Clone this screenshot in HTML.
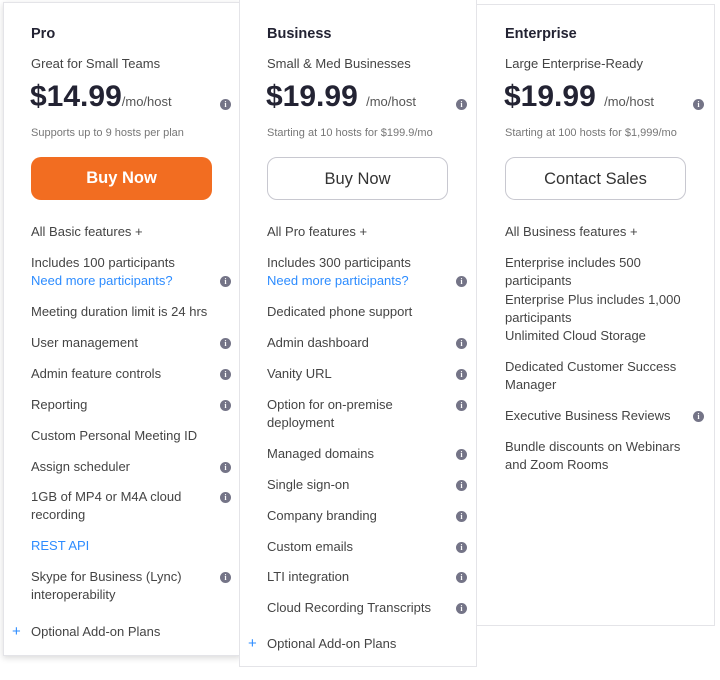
<!DOCTYPE html>
<html><head><meta charset="utf-8"><style>
body{margin:0;width:720px;height:680px;background:#fff;position:relative;overflow:hidden;font-family:"Liberation Sans",sans-serif;color:#3a3a40}
.card{position:absolute;background:#fff;border:1px solid #e4e4e8}
.t{position:absolute;font-size:13px;line-height:18px;white-space:nowrap;color:#444}
.h{font-size:14.5px;font-weight:bold;color:#232333}
.s{font-size:11px;color:#777}
.l{color:#2d8cff}
.p{position:absolute;font-size:30px;font-weight:bold;color:#232333;line-height:36px;white-space:nowrap}
.p span{font-size:13px;font-weight:normal;color:#555}
.i{position:absolute;width:11px;height:11px;border-radius:50%;background:#747487;color:#fff;font:bold 8px/11px "Liberation Serif",serif;text-align:center}
.b{position:absolute;width:181px;height:43px;border-radius:10px;font-size:16.5px;line-height:43px;text-align:center;box-sizing:border-box}
.plus{position:absolute;color:#2d8cff;font-size:15px;line-height:18px}
</style></head><body>
<div class="card" style="left:476px;top:4px;width:237px;height:620px"></div>
<div class="card" style="left:3px;top:2px;width:236px;height:652px;box-shadow:0 2px 6px rgba(0,0,0,.15)"></div>
<div class="card" style="left:239px;top:-1px;width:236px;height:666px"></div>

<!-- Pro -->
<div class="t h" style="left:31px;top:25px">Pro</div>
<div class="t" style="left:31px;top:55px">Great for Small Teams</div>
<div class="p" style="left:30px;top:79px">$14.99<span>/mo/host</span></div>
<div class="i" style="left:220px;top:99px">i</div>
<div class="t s" style="left:31px;top:124px">Supports up to 9 hosts per plan</div>
<div class="b" style="left:31px;top:157px;background:#f26d21;color:#fff;font-weight:bold">Buy Now</div>
<div class="t" style="left:31px;top:223px">All Basic features +</div>
<div class="t" style="left:31px;top:254px">Includes 100 participants</div>
<div class="t l" style="left:31px;top:272px">Need more participants?</div>
<div class="t" style="left:31px;top:303px">Meeting duration limit is 24 hrs</div>
<div class="t" style="left:31px;top:334px">User management</div>
<div class="t" style="left:31px;top:365px">Admin feature controls</div>
<div class="t" style="left:31px;top:396px">Reporting</div>
<div class="t" style="left:31px;top:427px">Custom Personal Meeting ID</div>
<div class="t" style="left:31px;top:458px">Assign scheduler</div>
<div class="t" style="left:31px;top:488px">1GB of MP4 or M4A cloud</div>
<div class="t" style="left:31px;top:506px">recording</div>
<div class="t l" style="left:31px;top:537px">REST API</div>
<div class="t" style="left:31px;top:568px">Skype for Business (Lync)</div>
<div class="t" style="left:31px;top:586px">interoperability</div>
<div class="plus" style="left:12px;top:623px">+</div>
<div class="t" style="left:31px;top:623px">Optional Add-on Plans</div>
<div class="i" style="left:220px;top:276px">i</div>
<div class="i" style="left:220px;top:338px">i</div>
<div class="i" style="left:220px;top:369px">i</div>
<div class="i" style="left:220px;top:400px">i</div>
<div class="i" style="left:220px;top:462px">i</div>
<div class="i" style="left:220px;top:492px">i</div>
<div class="i" style="left:220px;top:572px">i</div>

<!-- Business -->
<div class="t h" style="left:267px;top:25px">Business</div>
<div class="t" style="left:267px;top:55px">Small &amp; Med Businesses</div>
<div class="p" style="left:266px;top:79px">$19.99 <span>/mo/host</span></div>
<div class="i" style="left:456px;top:99px">i</div>
<div class="t s" style="left:267px;top:124px">Starting at 10 hosts for $199.9/mo</div>
<div class="b" style="left:267px;top:157px;border:1px solid #c8c8d0;color:#333">Buy Now</div>
<div class="t" style="left:267px;top:223px">All Pro features +</div>
<div class="t" style="left:267px;top:254px">Includes 300 participants</div>
<div class="t l" style="left:267px;top:272px">Need more participants?</div>
<div class="t" style="left:267px;top:303px">Dedicated phone support</div>
<div class="t" style="left:267px;top:334px">Admin dashboard</div>
<div class="t" style="left:267px;top:365px">Vanity URL</div>
<div class="t" style="left:267px;top:396px">Option for on-premise</div>
<div class="t" style="left:267px;top:414px">deployment</div>
<div class="t" style="left:267px;top:445px">Managed domains</div>
<div class="t" style="left:267px;top:476px">Single sign-on</div>
<div class="t" style="left:267px;top:507px">Company branding</div>
<div class="t" style="left:267px;top:538px">Custom emails</div>
<div class="t" style="left:267px;top:568px">LTI integration</div>
<div class="t" style="left:267px;top:599px">Cloud Recording Transcripts</div>
<div class="plus" style="left:248px;top:635px">+</div>
<div class="t" style="left:267px;top:635px">Optional Add-on Plans</div>
<div class="i" style="left:456px;top:276px">i</div>
<div class="i" style="left:456px;top:338px">i</div>
<div class="i" style="left:456px;top:369px">i</div>
<div class="i" style="left:456px;top:400px">i</div>
<div class="i" style="left:456px;top:449px">i</div>
<div class="i" style="left:456px;top:480px">i</div>
<div class="i" style="left:456px;top:511px">i</div>
<div class="i" style="left:456px;top:542px">i</div>
<div class="i" style="left:456px;top:572px">i</div>
<div class="i" style="left:456px;top:603px">i</div>

<!-- Enterprise -->
<div class="t h" style="left:505px;top:25px">Enterprise</div>
<div class="t" style="left:505px;top:55px">Large Enterprise-Ready</div>
<div class="p" style="left:504px;top:79px">$19.99 <span>/mo/host</span></div>
<div class="i" style="left:693px;top:99px">i</div>
<div class="t s" style="left:505px;top:124px">Starting at 100 hosts for $1,999/mo</div>
<div class="b" style="left:505px;top:157px;border:1px solid #c8c8d0;color:#333">Contact Sales</div>
<div class="t" style="left:505px;top:223px">All Business features +</div>
<div class="t" style="left:505px;top:254px">Enterprise includes 500</div>
<div class="t" style="left:505px;top:272px">participants</div>
<div class="t" style="left:505px;top:291px">Enterprise Plus includes 1,000</div>
<div class="t" style="left:505px;top:309px">participants</div>
<div class="t" style="left:505px;top:327px">Unlimited Cloud Storage</div>
<div class="t" style="left:505px;top:358px">Dedicated Customer Success</div>
<div class="t" style="left:505px;top:376px">Manager</div>
<div class="t" style="left:505px;top:407px">Executive Business Reviews</div>
<div class="i" style="left:693px;top:411px">i</div>
<div class="t" style="left:505px;top:438px">Bundle discounts on Webinars</div>
<div class="t" style="left:505px;top:456px">and Zoom Rooms</div>
</body></html>
